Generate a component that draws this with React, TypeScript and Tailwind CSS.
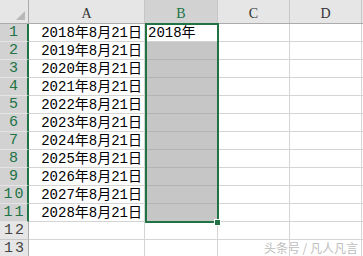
import React from 'react'

const GREEN = '#217346'

const dates = [
  '2018年8月21日', '2019年8月21日', '2020年8月21日', '2021年8月21日',
  '2022年8月21日', '2023年8月21日', '2024年8月21日', '2025年8月21日',
  '2026年8月21日', '2027年8月21日', '2028年8月21日',
]

const cellFont = "font-['Liberation_Mono','Noto_Sans_CJK_SC',monospace]"

function CornerCell() {
  return (
    <div className="w-[29px] h-full border-r border-[#ababab] relative">
      <svg className="absolute right-[3px] bottom-[3px]" width="9" height="9" viewBox="0 0 9 9">
        <polygon points="9,0 9,9 0,9" fill="#b8b8b8" />
      </svg>
    </div>
  )
}

function ColHeader({ label, width, active }: { label: string; width: string; active?: boolean }) {
  return (
    <div
      className={`${width} h-full flex items-end justify-center pb-[2px] border-r border-[#c6c6c6] text-[14px] leading-none font-['Liberation_Serif',serif] ${
        active ? 'bg-[#d2d2d2] text-[#217346]' : 'text-[#333]'
      }`}
    >
      {label}
    </div>
  )
}

function Row({ n }: { n: number }) {
  const inSel = n <= 11
  const value = dates[n - 1]
  return (
    <div className="flex h-[18px]">
      <div
        className={`w-[29px] shrink-0 flex items-center justify-center text-[15px] leading-none tracking-[2px] pl-[2px] font-['Liberation_Mono',monospace] border-b ${
          inSel
            ? 'bg-[#d2d2d2] text-[#217346] border-r-2 border-r-[#217346] border-b-[#e4e4e4]'
            : 'bg-[#e6e6e6] text-[#444] border-r border-r-[#ababab] border-b-[#c8c8c8]'
        }`}
      >
        {n}
      </div>
      <div
        className={`w-[116px] shrink-0 border-r border-b border-[#d4d4d4] text-right pr-[2px] text-[14px] leading-[18px] text-black ${cellFont}`}
      >
        {value ?? ''}
      </div>
      <div
        className={`w-[73px] shrink-0 border-r border-b text-[14px] leading-[18px] pl-[3px] text-black ${cellFont} ${
          n === 1 ? 'bg-white border-[#d4d4d4]' : inSel ? 'bg-[#c6c6c6] border-[#b4b4b4]' : 'border-[#d4d4d4]'
        }`}
      >
        {n === 1 ? '2018年' : ''}
      </div>
      <div className="w-[72px] shrink-0 border-r border-b border-[#d4d4d4]" />
      <div className="w-[72px] shrink-0 border-r border-b border-[#d4d4d4]" />
      <div className="flex-1 border-b border-[#d4d4d4]" />
    </div>
  )
}

export default function App() {
  return (
    <div className="w-[363px] h-[256px] overflow-hidden bg-white relative">
      <div className="flex h-[24px] bg-[#e6e6e6] border-b border-[#ababab]">
        <CornerCell />
        <ColHeader label="A" width="w-[116px]" />
        <ColHeader label="B" width="w-[73px]" active />
        <ColHeader label="C" width="w-[72px]" />
        <ColHeader label="D" width="w-[72px]" />
        <div className="flex-1" />
      </div>

      {Array.from({ length: 13 }, (_, i) => (
        <Row key={i} n={i + 1} />
      ))}

      {/* selection outline for B1:B11 with fill handle */}
      <div
        className="absolute left-[145px] top-[23px] w-[74px] h-[200px] border-2 pointer-events-none"
        style={{ borderColor: GREEN }}
      />
      <div className="absolute left-[214px] top-[219px] w-[7px] h-[7px] bg-[#217346] border border-white" />

      <div className="absolute right-[5px] bottom-[2px] text-[12px] leading-none text-[#bdbdbd] font-['Noto_Sans_CJK_SC',sans-serif] [text-shadow:0_0_2px_#fff]">
        头条号 / 凡人凡言
      </div>
    </div>
  )
}
